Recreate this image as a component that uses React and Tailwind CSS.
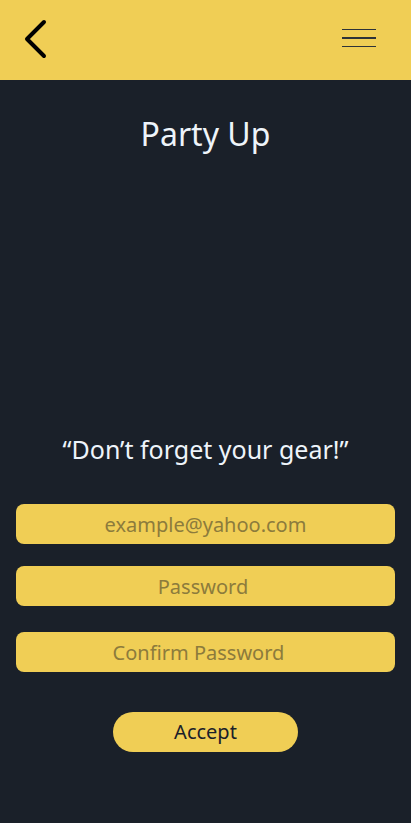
export default function App() {
  const fields = [
    { ph: 'example@yahoo.com', cls: 'mt-[42px]' },
    { ph: 'Password', cls: 'mt-[22px] pr-[5px]' },
    { ph: 'Confirm Password', cls: 'mt-[26px] pr-[14px]' },
  ];

  return (
    <div className="min-h-[823px] w-full bg-[#1a2029] font-['Noto_Sans',sans-serif] flex flex-col">
      {/* Header */}
      <div className="h-[80px] bg-[#f0ce55] flex items-center justify-between pl-[24px] pr-[35px]">
        <svg width="26" height="40" viewBox="0 0 26 40" className="-mt-[3px]">
          <path d="M20 3 L3 20 L20 37" fill="none" stroke="#000" strokeWidth="4" strokeLinecap="round" strokeLinejoin="round" />
        </svg>
        <div className="flex flex-col gap-[7px] w-[34px] -mt-[4px]">
          <div className="h-[1.5px] bg-[#2e3338]" />
          <div className="h-[1.5px] bg-[#2e3338]" />
          <div className="h-[1.5px] bg-[#2e3338]" />
        </div>
      </div>

      <h1 className="text-center text-[#eef4fa] text-[32px] leading-none mt-[38px]">Party Up</h1>

      <p className="text-center text-[#eef4fa] text-[25px] leading-none mt-[287px]">“Don’t forget your gear!”</p>

      <div className="px-[16px] flex flex-col">
        {fields.map((f) => (
          <input
            key={f.ph}
            type="text"
            placeholder={f.ph}
            className={`${f.cls} h-[40px] w-full rounded-[8px] bg-[#f0ce55] text-center text-[20px] text-[#1a2029] placeholder:text-[#8c7b3c] outline-none`}
          />
        ))}
      </div>

      <div className="flex justify-center mt-[40px]">
        <button className="w-[185px] h-[40px] rounded-full bg-[#f0ce55] text-[20px] text-[#1a2029]">Accept</button>
      </div>
    </div>
  );
}
